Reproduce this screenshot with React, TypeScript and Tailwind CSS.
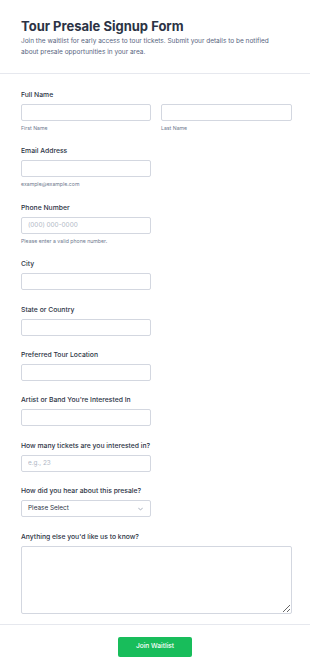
import React from "react";

const font = { fontFamily: "Inter, 'Noto Sans', sans-serif" };

function Label({ children }: { children: React.ReactNode }) {
  return <div className="text-[6.8px] leading-[11px] font-medium text-[#2c3345] mb-[4px]">{children}</div>;
}

function Sub({ children }: { children: React.ReactNode }) {
  return <div className="text-[5.2px] leading-[8px] text-[#6f7a8f] mt-[3px]">{children}</div>;
}

function Input({ placeholder, className = "w-[130px]" }: { placeholder?: string; className?: string }) {
  return (
    <input
      placeholder={placeholder}
      className={`${className} block h-[17px] rounded-[2px] border border-[#d3d7e0] bg-white px-[6px] text-[6.4px] text-[#2c3345] placeholder:text-[#b0b7c5] outline-none`}
    />
  );
}

function Field({ label, placeholder, sub }: { label: string; placeholder?: string; sub?: string }) {
  return (
    <div className="mb-[13.4px]">
      <Label>{label}</Label>
      <Input placeholder={placeholder} />
      {sub && <Sub>{sub}</Sub>}
    </div>
  );
}

export default function App() {
  return (
    <div className="w-[310px] h-[672px] bg-white overflow-hidden" style={font}>
      {/* Header */}
      <div className="px-[21px] pt-[16px] pb-[15px] border-b border-[#e6e8ee]">
        <h1 className="text-[13px] leading-[20px] font-bold text-[#2c3345]">Tour Presale Signup Form</h1>
        <p className="max-w-[262px] text-[6.5px] leading-[11px] text-[#57647e]">
          Join the waitlist for early access to tour tickets. Submit your details to be notified about presale opportunities in your area.
        </p>
      </div>

      {/* Fields */}
      <div className="px-[21px] pt-[15px]">
        <div className="mb-[13.4px]">
          <Label>Full Name</Label>
          <div className="flex gap-[10px]">
            <div>
              <Input />
              <Sub>First Name</Sub>
            </div>
            <div>
              <Input className="w-[131px]" />
              <Sub>Last Name</Sub>
            </div>
          </div>
        </div>

        <Field label="Email Address" sub="example@example.com" />
        <Field label="Phone Number" placeholder="(000) 000-0000" sub="Please enter a valid phone number." />
        <Field label="City" />
        <Field label="State or Country" />
        <Field label="Preferred Tour Location" />
        <Field label="Artist or Band You're Interested In" />
        <Field label="How many tickets are you interested in?" placeholder="e.g., 23" />

        <div className="mb-[13.4px]">
          <Label>How did you hear about this presale?</Label>
          <div className="relative w-[130px] h-[17px] rounded-[2px] border border-[#d3d7e0] bg-white flex items-center px-[6px]">
            <span className="text-[6.4px] text-[#2c3345]">Please Select</span>
            <svg className="absolute right-[7px] top-[6px]" width="5" height="4" viewBox="0 0 10 6" fill="none">
              <path d="M1 1l4 4 4-4" stroke="#8c96a8" strokeWidth="1.5" strokeLinecap="round" strokeLinejoin="round" />
            </svg>
          </div>
        </div>

        <div className="pb-[10px]">
          <Label>Anything else you'd like us to know?</Label>
          <textarea className="block w-[271px] h-[68px] rounded-[2px] border border-[#d3d7e0] bg-white outline-none" />
        </div>
      </div>

      {/* Footer */}
      <div className="border-t border-[#e6e8ee] flex justify-center pt-[12px]">
        <button className="w-[74px] h-[20px] rounded-[2px] bg-[#18bd5b] text-white text-[6.6px] font-medium">
          Join Waitlist
        </button>
      </div>
    </div>
  );
}
